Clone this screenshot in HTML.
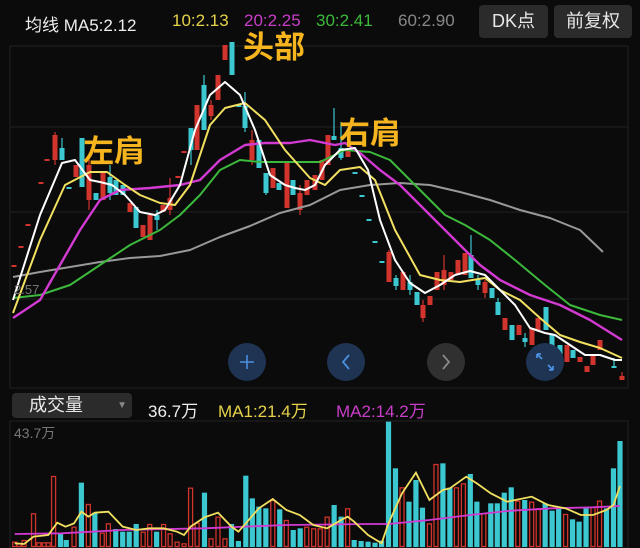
<!DOCTYPE html>
<html><head><meta charset="utf-8">
<style>
html,body{margin:0;padding:0;background:#0b0b0b;width:640px;height:548px;overflow:hidden}
body{font-family:"Liberation Sans","Noto Sans CJK SC",sans-serif;position:relative}
.t{position:absolute;font-size:17px;white-space:nowrap}
.btn{position:absolute;background:#2b2b2b;border-radius:4px;color:#e8e8e8;font-size:18px;text-align:center}
.lbl{position:absolute;color:#f6b51e;font-weight:bold;font-size:31px;font-family:"Noto Sans CJK SC",sans-serif;white-space:nowrap}
svg{position:absolute;left:0;top:0}
</style></head><body>
<svg id="s" width="640" height="548" viewBox="0 0 640 548">
<rect x="10" y="46" width="618" height="342" fill="none" stroke="#222" stroke-width="1"/>
<line x1="10" y1="127" x2="628" y2="127" stroke="#222"/>
<line x1="10" y1="212" x2="628" y2="212" stroke="#222"/>
<line x1="10" y1="299" x2="628" y2="299" stroke="#222"/>
<rect x="10" y="421" width="618" height="127" fill="none" stroke="#222"/>
<g id="c"></g>
<g id="l" fill="none" stroke-width="2" stroke-linejoin="round"></g>
<g id="v"></g>
<circle cx="247" cy="362" r="19" fill="#1e3452"/>
<path d="M240 362h14M247 355v14" stroke="#4a8fe0" stroke-width="1.6"/>
<circle cx="346" cy="362" r="19" fill="#1e3452"/>
<path d="M349 355l-6 7l6 7" stroke="#4a8fe0" stroke-width="1.8" fill="none"/>
<circle cx="446" cy="362" r="19" fill="#303030"/>
<path d="M443 355l6 7l-6 7" stroke="#888" stroke-width="1.8" fill="none"/>
<circle cx="545" cy="362" r="19" fill="#1e3452"/>
<path d="M537 354l5 5M537 354v4M537 354h4M553 370l-5-5M553 370v-4M553 370h-4" stroke="#4a8fe0" stroke-width="1.8" fill="none"/>
<text x="14" y="294" fill="#777" font-size="13" font-family="Liberation Sans">2.57</text>
<text x="14" y="438" fill="#777" font-size="14" font-family="Liberation Sans,Noto Sans CJK SC,sans-serif">43.7万</text>
</svg>
<div class="t" style="left:25px;top:11px;color:#eee">均线 MA5:2.12</div>
<div class="t" style="left:172px;top:11px;color:#e6d24a">10:2.13</div>
<div class="t" style="left:244px;top:11px;color:#c83ec8">20:2.25</div>
<div class="t" style="left:316px;top:11px;color:#3cb93c">30:2.41</div>
<div class="t" style="left:398px;top:11px;color:#888">60:2.90</div>
<div class="btn" style="left:479px;top:5px;width:69px;height:33px;line-height:33px">DK点</div>
<div class="btn" style="left:554px;top:5px;width:78px;height:33px;line-height:33px">前复权</div>
<div class="btn" style="left:12px;top:393px;width:120px;height:25px;line-height:25px;text-align:left"><span style="margin-left:17px;font-size:18px">成交量</span><span style="position:absolute;right:5px;font-size:10px;color:#888">▼</span></div>
<div class="t" style="left:148px;top:397px;color:#eee">36.7万</div>
<div class="t" style="left:218px;top:397px;color:#e6d24a">MA1:21.4万</div>
<div class="t" style="left:336px;top:397px;color:#c83ec8">MA2:14.2万</div>
<div class="lbl" style="left:83px;top:126px">左肩</div>
<div class="lbl" style="left:243px;top:22px">头部</div>
<div class="lbl" style="left:339px;top:108px">右肩</div>
<script>
var NS="http://www.w3.org/2000/svg";
function el(p,t,a){var e=document.createElementNS(NS,t);for(var k in a)e.setAttribute(k,a[k]);p.appendChild(e);return e;}
var R="#d0342c",C="#3cc8d0";
var cs=[[14,265,267,'r'],[21,246,248,'r'],[28,224,226,'r'],[41,182,184,'r'],[47,159,161,'r'],[55,135,160,'r',132,165],[62,148,160,'c',138,160],[69,187,189,'c'],[76,165,177,'r'],[82,138,187,'c'],[89,165,200,'r',160,210],[96,193,200,'c'],[103,172,200,'r'],[110,177,193,'c',165,200],[116,180,195,'c'],[123,185,195,'c'],[130,203,212,'r'],[136,207,228,'c'],[143,225,237,'r'],[150,215,240,'r'],[157,215,220,'c',210,230],[163,205,212,'r'],[170,198,210,'r',178,215],[178,176,178,'r'],[184,151,153,'r'],[191,128,150,'c',128,165],[197,105,150,'r'],[204,85,130,'c',75,130],[211,105,116,'r',100,120],[218,75,100,'r'],[225,45,60,'r'],[232,42,75,'c'],[239,105,107,'c'],[245,106,128,'c',92,132],[252,140,160,'r',130,165],[259,140,168,'c'],[266,173,193,'c',175,195],[273,168,188,'r'],[279,183,190,'c'],[287,163,208,'r'],[293,180,195,'c'],[300,193,210,'r',185,215],[307,180,195,'r'],[315,175,190,'r'],[322,160,180,'r'],[328,135,165,'r'],[334,136,140,'c',108,140],[341,148,158,'c',122,160],[348,150,157,'r'],[355,172,174,'c'],[362,195,197,'c'],[369,219,221,'c'],[375,241,243,'c'],[382,261,263,'c'],[389,252,282,'r',250,282],[396,278,286,'c',275,290],[403,272,290,'r'],[410,282,290,'c',275,295],[417,292,305,'c'],[423,305,318,'r',300,322],[430,296,305,'r'],[437,272,290,'r'],[444,270,285,'r',255,290],[451,272,280,'r'],[458,260,275,'r'],[465,253,275,'r'],[471,255,278,'c',235,278],[478,280,285,'c',275,290],[485,282,293,'r',280,298],[492,288,298,'c'],[498,302,315,'c',298,315],[505,318,330,'r'],[512,325,340,'c'],[519,325,335,'r'],[525,338,342,'c',333,347],[532,328,345,'r'],[538,318,330,'r'],[546,307,330,'c'],[552,335,348,'c'],[560,345,358,'c'],[567,345,362,'r'],[573,350,358,'c'],[580,357,362,'r'],[587,366,372,'r'],[593,355,365,'r'],[600,340,350,'r'],[614,366,368,'c',358,368],[622,376,380,'r',372,380]];
var g=document.getElementById('c');
cs.forEach(function(d){var col=d[3]=='r'?R:C;
 if(d[4]!==undefined)el(g,'line',{x1:d[0],x2:d[0],y1:d[4],y2:d[5],stroke:col,'stroke-width':1.2});
 el(g,'rect',{x:d[0]-2.5,y:d[1],width:5,height:Math.max(2,d[2]-d[1]),fill:col});});
var L=document.getElementById('l');
function pl(pts,col,w){el(L,'polyline',{points:pts.map(function(p){return p.join(',')}).join(' '),stroke:col,'stroke-width':w||2});}
pl([[13,277],[40,272],[70,267],[100,262],[130,258],[160,256],[190,250],[220,237],[250,226],[280,213],[310,205],[340,190],[370,185],[400,183],[430,185],[460,192],[490,200],[520,210],[550,218],[580,230],[603,252]],'#999');
pl([[13,298],[40,295],[70,285],[100,265],[130,245],[160,230],[180,215],[200,195],[220,170],[240,160],[260,162],[290,162],[320,162],[345,150],[370,152],[390,160],[410,180],[430,200],[445,215],[465,225],[490,240],[515,260],[545,285],[570,305],[600,315],[622,320]],'#3cb93c');
pl([[13,318],[40,300],[60,265],[80,230],[100,200],[120,190],[150,188],[180,185],[200,180],[220,160],[245,145],[265,143],[290,143],[310,140],[335,145],[345,143],[360,153],[380,170],[400,185],[420,205],[440,225],[460,245],[480,265],[500,280],[530,295],[560,305],[590,320],[622,340]],'#d23ad2',2.4);
pl([[13,313],[40,240],[65,185],[90,172],[107,172],[125,185],[140,195],[160,203],[175,205],[190,185],[210,125],[225,108],[245,103],[265,120],[285,150],[310,178],[325,185],[340,170],[360,167],[375,180],[395,230],[420,275],[440,280],[460,282],[485,278],[500,290],[520,300],[540,318],[560,335],[580,342],[600,348],[622,358]],'#f2e060');
pl([[13,300],[40,215],[62,163],[75,160],[90,180],[100,182],[112,185],[125,195],[140,212],[155,215],[165,210],[180,185],[195,130],[210,95],[225,82],[240,95],[255,130],[270,175],[285,185],[295,188],[305,190],[315,185],[325,165],[340,150],[355,148],[368,170],[380,220],[395,260],[410,283],[425,293],[440,285],[455,275],[470,271],[485,275],[500,290],[515,305],[530,328],[545,333],[555,335],[570,345],[585,355],[600,355],[615,360],[622,360]],'#fff');
var vb=[[36,485,'r'],[47,490,'r'],[59,480,'r'],[82,400,'r'],[95,487,'r'],[108,487,'r'],[118,487,'r'],[131,288,'r'],[148,460,'c'],[162,480,'c'],[181,440,'r'],[199,308,'c'],[216,372,'r'],[232,398,'c'],[250,458,'r'],[265,430,'r'],[283,447,'c'],[300,455,'c'],[316,455,'c'],[333,432,'c'],[350,455,'r'],[366,432,'r'],[383,455,'c'],[400,432,'r'],[416,460,'r'],[433,485,'r'],[450,490,'r'],[466,323,'r'],[482,428,'r'],[500,338,'c'],[516,475,'r'],[533,410,'r'],[550,475,'r'],[566,432,'c'],[583,483,'c'],[601,287,'c'],[617,355,'c'],[633,380,'c'],[650,385,'c'],[667,360,'r'],[684,388,'c'],[700,420,'r'],[717,450,'c'],[734,445,'c'],[750,440,'r'],[767,445,'r'],[783,445,'r'],[800,410,'r'],[817,375,'c'],[834,410,'c'],[850,385,'r'],[866,480,'c'],[883,483,'c'],[900,485,'c'],[917,488,'c'],[933,482,'c'],[950,125,'c'],[967,265,'c'],[983,322,'r'],[1000,365,'c'],[1017,300,'c'],[1033,383,'c'],[1050,430,'r'],[1066,252,'r'],[1083,250,'c'],[1100,323,'c'],[1116,322,'r'],[1133,310,'r'],[1150,282,'c'],[1166,365,'c'],[1183,400,'r'],[1200,370,'c'],[1216,370,'c'],[1233,338,'c'],[1250,322,'c'],[1266,362,'r'],[1283,360,'c'],[1300,365,'r'],[1316,385,'r'],[1333,370,'c'],[1350,392,'c'],[1366,385,'c'],[1383,402,'r'],[1400,418,'c'],[1416,425,'c'],[1433,385,'c'],[1450,380,'r'],[1466,362,'r'],[1483,385,'c'],[1500,265,'c'],[1516,183,'c']];
var SX=620/1516;
var V=document.getElementById('v');
vb.forEach(function(d){var x=d[0]*SX,y=380+d[1]/3;var col=d[2]=='r'?R:C;
 if(d[2]=='r')el(V,'rect',{x:x-2,y:y+0.5,width:4,height:546-y,fill:'none',stroke:col,'stroke-width':1.3});
 else el(V,'rect',{x:x-2.6,y:y,width:5.2,height:547-y,fill:col});});
function vl(a,col){el(V,'polyline',{points:a.map(function(p){return (p[0]*SX)+','+(380+p[1]/3)}).join(' '),fill:'none',stroke:col,'stroke-width':1.8});}
vl([[36,462],[150,460],[300,450],[500,445],[700,435],[900,432],[950,432],[1050,420],[1150,405],[1250,392],[1350,385],[1450,382],[1516,378]],'#d23ad2');
vl([[36,490],[59,492],[82,470],[118,465],[140,428],[160,440],[181,430],[199,395],[216,410],[232,398],[265,395],[300,440],[333,450],[366,445],[400,445],[433,455],[450,465],[466,440],[500,412],[533,398],[566,440],[583,455],[601,430],[633,385],[667,357],[700,390],[733,405],[766,435],[800,445],[834,420],[850,410],[866,425],[900,465],[933,490],[950,430],[983,340],[1017,278],[1050,360],[1083,330],[1100,325],[1140,290],[1166,310],[1200,340],[1240,365],[1300,350],[1340,375],[1383,385],[1420,405],[1450,405],[1483,390],[1500,375],[1516,318]],'#f2e060');
</script>
</body></html>
